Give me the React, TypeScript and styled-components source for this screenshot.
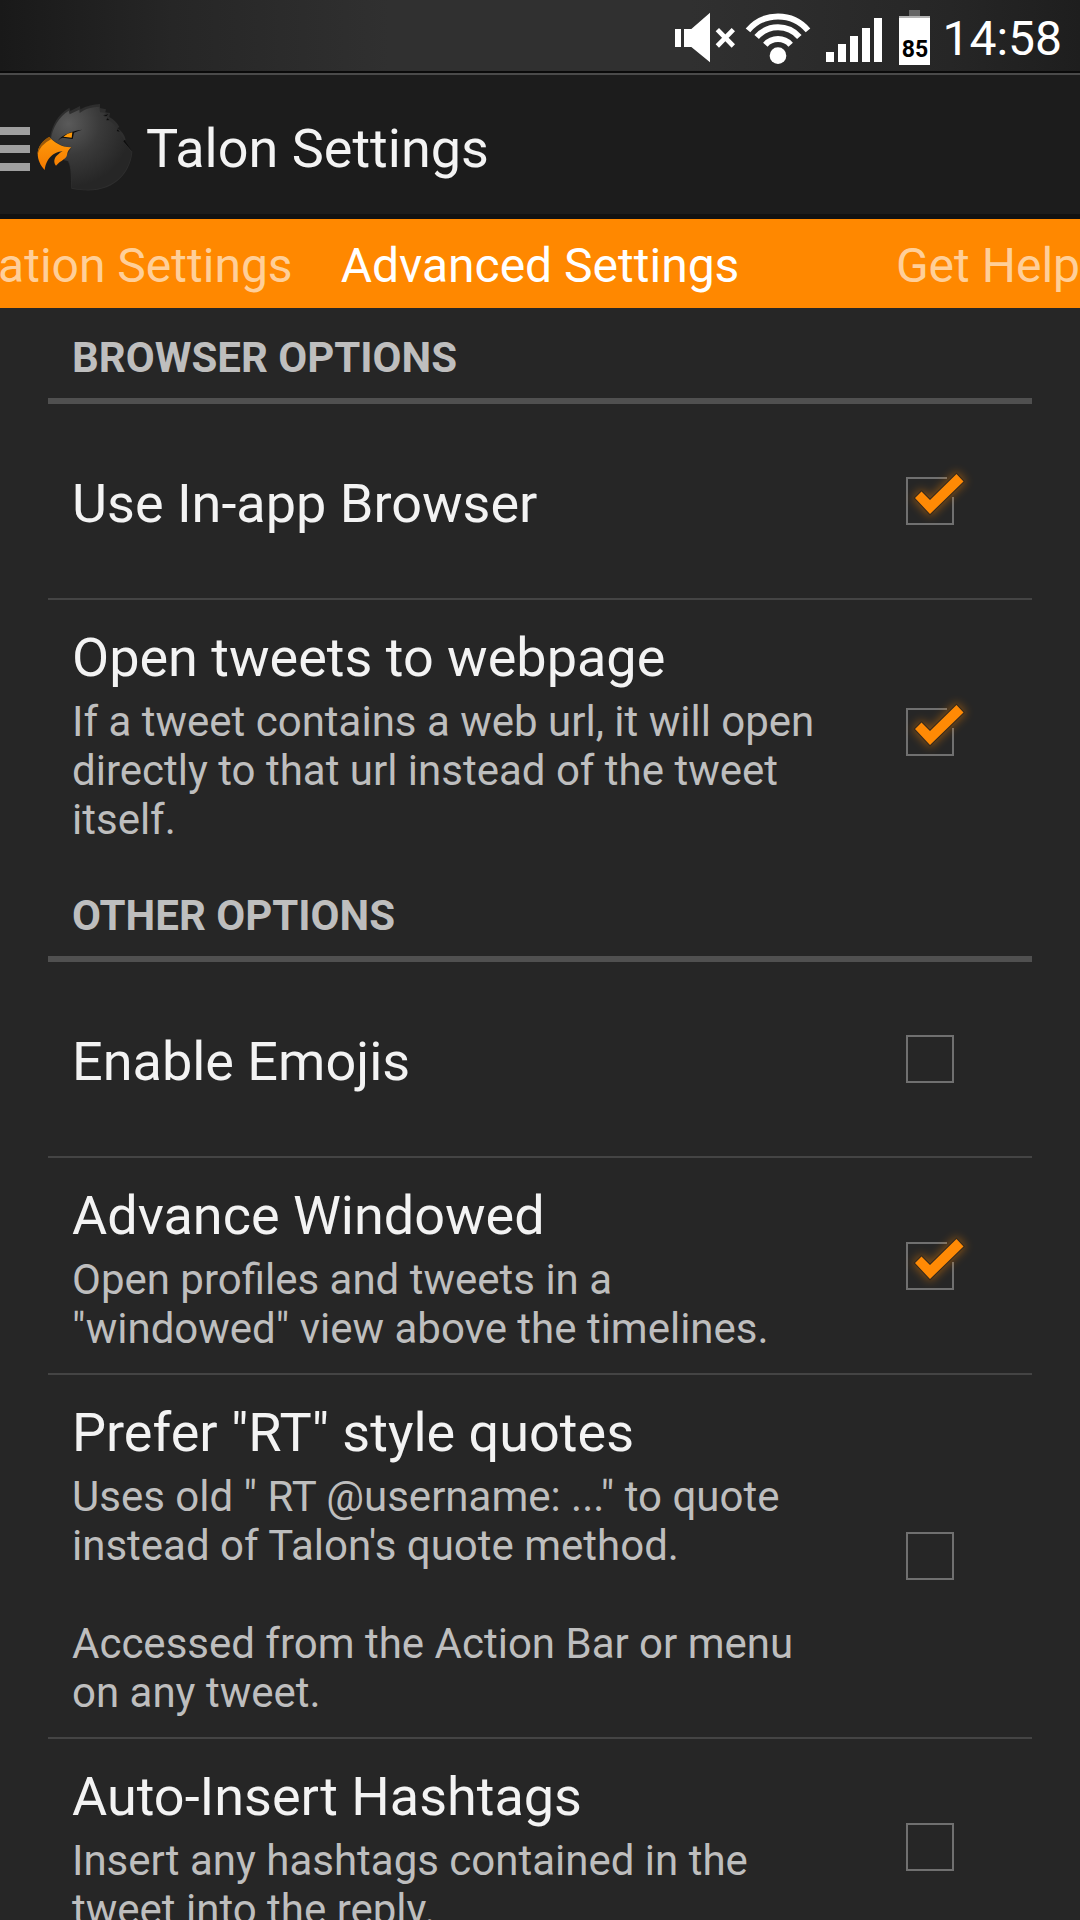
import React from "react";
import styled, { createGlobalStyle } from "styled-components";

const GlobalStyle = createGlobalStyle`
  *, *::before, *::after { box-sizing: border-box; }
  html, body, #root { height: 100%; }
  body {
    margin: 0;
    background: #262626;
    color: #f3f3f3;
    font-family: Roboto, "Noto Sans", sans-serif;
    overflow: hidden;
  }
  h1, h2, p { margin: 0; font-weight: 400; }
`;

const Screen = styled.div`
  display: flex;
  flex-direction: column;
  height: 100%;
`;

const StatusBar = styled.div`
  flex: none;
  display: flex;
  align-items: flex-end;
  justify-content: flex-end;
  height: 75px;
  padding: 0 18px 8px 0;
  background: linear-gradient(90deg, #191919, #262626 16%, #303030 36%, #303030 64%, #262626 88%, #1e1e1e);
  border-bottom: 2px solid #4a4a4a;
  box-shadow: inset 0 -2px 0 #0a0a0a;
`;

const StatusIcons = styled.svg`
  display: block;
  width: 207px;
  height: 65px;
`;

const Battery = styled.div`
  display: flex;
  flex-direction: column;
  align-items: center;
  width: 31px;
  margin: 0 12px 0 17px;

  &::before {
    content: "";
    width: 11px;
    height: 6px;
    background: #666666;
  }
`;

const BatteryLevel = styled.span`
  width: 100%;
  height: 49px;
  padding-top: 18px;
  background: #ffffff;
  border-top: 2px solid #b4b4b4;
  color: #000000;
  font-size: 23px;
  font-weight: 700;
  line-height: 28px;
  text-align: center;
`;

const Clock = styled.time`
  color: #ffffff;
  font-size: 48px;
  line-height: 52px;
`;

const ActionBar = styled.header`
  flex: none;
  display: flex;
  align-items: center;
  height: 144px;
  padding-top: 8px;
  background: #1c1c1c;
  border-bottom: 5px solid #111111;
`;

const UpButton = styled.button`
  display: flex;
  align-items: center;
  gap: 7px;
  padding: 0;
  border: 0;
  background: none;
  cursor: pointer;
`;

const DrawerIcon = styled.svg`
  width: 30px;
  height: 44px;
`;

const Logo = styled.svg`
  width: 96px;
  height: 96px;
`;

const Title = styled.h1`
  margin-left: 13px;
  font-size: 54px;
  line-height: 64px;
`;

const TabStrip = styled.nav`
  flex: none;
  display: grid;
  grid-template-columns: minmax(0, 1fr) auto minmax(0, 1fr);
  column-gap: 48px;
  height: 89px;
  padding-top: 4px;
  background: #ff8800;
  overflow: hidden;
`;

const TabSlot = styled.div`
  display: flex;
  align-items: center;
  justify-content: flex-end;
  min-width: 0;
`;

const Tab = styled.a<{ $active?: boolean }>`
  flex: none;
  color: ${(p) => (p.$active ? "#ffffff" : "#ffcf99")};
  font-size: 48px;
  line-height: 56px;
  text-decoration: none;
  white-space: nowrap;
`;

const Preferences = styled.main`
  flex: 1;
  min-height: 0;
  padding: 0 48px;
  overflow: hidden;
`;

const Category = styled.h2`
  height: 96px;
  padding: 25px 24px 0;
  border-bottom: 6px solid #505050;
  color: #bebebe;
  font-size: 42px;
  font-weight: 700;
  line-height: 49px;
  text-transform: uppercase;
`;

const Row = styled.div<{ $last?: boolean }>`
  display: flex;
  align-items: center;
  min-height: 196px;
  padding-right: 54px;
  border-bottom: 2px solid ${(p) => (p.$last ? "transparent" : "#444444")};
`;

const RowText = styled.label`
  flex: 1;
  min-width: 0;
  margin-right: 48px;
  padding: 26px 0 20px 24px;
`;

const RowTitle = styled.span`
  display: block;
  font-size: 54px;
  line-height: 64px;
`;

const Summary = styled.span`
  display: block;
  margin-top: 7px;
  color: #bebebe;
  font-size: 42px;
  line-height: 49px;
  white-space: pre-line;
`;

const CheckSlot = styled.span`
  position: relative;
  flex: none;
  display: grid;
  place-items: center;
  width: 96px;
  height: 96px;
`;

const CheckInput = styled.input`
  appearance: none;
  width: 48px;
  height: 48px;
  margin: 0;
  border: 2px solid #707070;

  &:checked {
    border-color: transparent;
  }

  & + svg {
    display: none;
  }

  &:checked + svg {
    display: block;
  }
`;

const CheckMark = styled.svg`
  position: absolute;
  inset: 0;
  width: 96px;
  height: 96px;
  overflow: visible;
  pointer-events: none;
`;

const TICK = "M33 45 39.500 38.500 48 47 74.500 21 81.500 28.500 48 61Z";

interface Preference {
  id: string;
  title: string;
  summary?: string;
  checked: boolean;
}

const groups: { name: string; items: Preference[] }[] = [
  {
    name: "Browser Options",
    items: [
      { id: "in-app", title: "Use In-app Browser", checked: true },
      {
        id: "webpage",
        title: "Open tweets to webpage",
        summary:
          "If a tweet contains a web url, it will open directly to that url instead of the tweet itself.",
        checked: true,
      },
    ],
  },
  {
    name: "Other Options",
    items: [
      { id: "emojis", title: "Enable Emojis", checked: false },
      {
        id: "windowed",
        title: "Advance Windowed",
        summary: 'Open profiles and tweets in a "windowed" view above the timelines.',
        checked: true,
      },
      {
        id: "rt-quotes",
        title: 'Prefer "RT" style quotes',
        summary:
          'Uses old " RT @username: ..." to quote instead of Talon\'s quote method.\n\nAccessed from the Action Bar or menu on any tweet.',
        checked: false,
      },
      {
        id: "hashtags",
        title: "Auto-Insert Hashtags",
        summary: "Insert any hashtags contained in the tweet into the reply.",
        checked: false,
      },
    ],
  },
];

function PreferenceRow({ item, last }: { item: Preference; last: boolean }) {
  const [checked, setChecked] = React.useState(item.checked);
  return (
    <Row $last={last}>
      <RowText htmlFor={item.id}>
        <RowTitle>{item.title}</RowTitle>
        {item.summary && <Summary>{item.summary}</Summary>}
      </RowText>
      <CheckSlot>
        <CheckInput
          id={item.id}
          type="checkbox"
          checked={checked}
          onChange={(e) => setChecked(e.target.checked)}
        />
        <CheckMark viewBox="0 0 96 96" aria-hidden="true">
          <defs>
            <filter id={`glow-${item.id}`} x="-50%" y="-50%" width="200%" height="200%">
              <feGaussianBlur stdDeviation="5" />
            </filter>
          </defs>
          <path d="M65 25H25V71H71V44" fill="none" stroke="#707070" strokeWidth="2" />
          <path
            d={TICK}
            fill="#ff8800"
            stroke="#ff8800"
            strokeWidth="4"
            opacity="0.45"
            filter={`url(#glow-${item.id})`}
          />
          <path
            d={TICK}
            fill="#ff8a05"
            stroke="#33281c"
            strokeWidth="2"
            style={{ paintOrder: "stroke" }}
          />
        </CheckMark>
      </CheckSlot>
    </Row>
  );
}

function StatusGlyphs() {
  return (
    <StatusIcons viewBox="45 0 621 195" aria-hidden="true" fill="#ffffff">
      <path d="M45 87H63V141H45ZM72 87H94L150 38V187L94 141H72Z" />
      <path d="M172 89 220 138M220 89 172 138" stroke="#ffffff" strokeWidth="14" />
      <circle cx="354" cy="167" r="25" />
      <g fill="none" stroke="#ffffff" strokeWidth="18">
        <path d="M264 91A118 118 0 0 1 444 91" />
        <path d="M290 111A85 85 0 0 1 418 111" />
        <path d="M316 134A51 51 0 0 1 392 134" />
      </g>
      <path d="M498 156h24v30h-24zM534 132h24v54h-24zM570 108h24v78h-24zM606 84h24v102h-24zM642 54h24v132h-24z" />
    </StatusIcons>
  );
}

function TalonLogo() {
  return (
    <Logo viewBox="111 32 288 288" aria-hidden="true">
      <defs>
        <radialGradient id="head" gradientUnits="userSpaceOnUse" cx="205" cy="100" r="190">
          <stop offset="0" stopColor="#5a5a5a" />
          <stop offset="0.500" stopColor="#3a3a3a" />
          <stop offset="1" stopColor="#262626" />
        </radialGradient>
        <linearGradient id="beak" x1="0" y1="0" x2="0" y2="1">
          <stop offset="0" stopColor="#ff9a0a" />
          <stop offset="1" stopColor="#f47a00" />
        </linearGradient>
      </defs>
      <path
        d="M150 142C156 104 174 72 208 52L211 62 240 47 241 57C260 46 280 42 300 41L300 53 318 57 316 66 330 68 328 80C342 88 352 98 358 110L352 114C366 122 374 134 377 148L371 150 397 184C392 244 346 306 250 300Q230 299 214 295C212 262 214 232 204 214Q200 207 193 209Z"
        fill="#2e2e2e"
      />
      <path
        d="M153 144C158 112 176 80 206 61L209 72 238 58 239 68C258 54 278 50 298 50L300 66 318 68 309 76 322 78 319 88C334 92 345 104 354 118L350 122C362 130 370 142 373 150L370 154 395 186C390 242 344 304 250 298Q230 297 216 293C214 262 216 232 206 212L192 210 215 171C192 172 168 158 153 144Z"
        fill="url(#head)"
      />
      <path
        d="M310 77 325 71 319 78ZM319 90 328 89 322 84ZM350 122 359 124 353 117ZM370 153 397 184 373 149Z"
        fill="#0c0c0c"
      />
      <path
        d="M148 141C162 156 186 172 214 171C206 178 202 184 201 194C198 208 184 208 168 226C160 216 162 204 170 196Q178 188 188 182C170 184 140 196 134 239C122 226 113 210 113 188C115 168 130 150 148 141Z"
        fill="url(#beak)"
      />
      <path d="M148 139C130 148 112 168 113 192Q120 164 153 147Z" fill="#9a5808" />
      <path d="M174 151C182 138 204 124 246 118Q232 122 222 127L218 146 188 142Q180 144 174 151Z" fill="#0c0c0c" />
      <path d="M190 139Q202 129 217 126L215 142Z" fill="#ff9a0a" />
    </Logo>
  );
}

export default function App() {
  return (
    <>
      <GlobalStyle />
      <Screen>
        <StatusBar>
          <StatusGlyphs />
          <Battery>
            <BatteryLevel>85</BatteryLevel>
          </Battery>
          <Clock>14:58</Clock>
        </StatusBar>
        <ActionBar>
          <UpButton type="button" aria-label="Open navigation drawer">
            <DrawerIcon viewBox="0 0 30 44" aria-hidden="true">
              <path d="M0 0H30V8H0ZM0 18H30V26H0ZM0 36H30V44H0Z" fill="#9f9f9f" />
            </DrawerIcon>
            <TalonLogo />
          </UpButton>
          <Title>Talon Settings</Title>
        </ActionBar>
        <TabStrip>
          <TabSlot>
            <Tab href="#notification">Notification Settings</Tab>
          </TabSlot>
          <TabSlot>
            <Tab href="#advanced" $active aria-current="page">
              Advanced Settings
            </Tab>
          </TabSlot>
          <TabSlot>
            <Tab href="#help">Get Help</Tab>
          </TabSlot>
        </TabStrip>
        <Preferences>
          {groups.map((group) => (
            <section key={group.name}>
              <Category>{group.name}</Category>
              {group.items.map((item, i) => (
                <PreferenceRow key={item.id} item={item} last={i === group.items.length - 1} />
              ))}
            </section>
          ))}
        </Preferences>
      </Screen>
    </>
  );
}
